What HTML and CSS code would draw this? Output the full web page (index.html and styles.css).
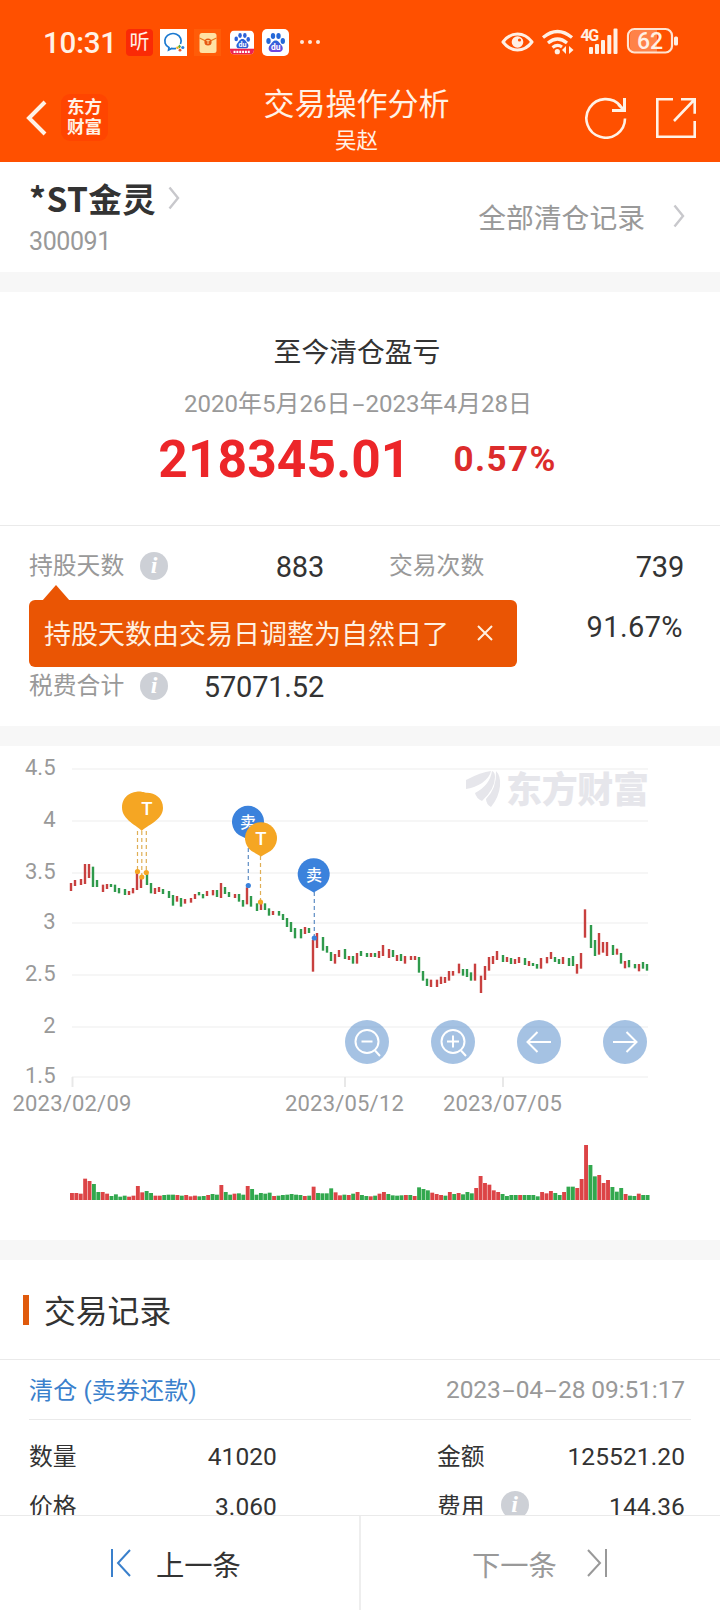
FILE: index.html
```
<!DOCTYPE html>
<html lang="zh-CN">
<head>
    <meta charset="UTF-8">
    <meta name="viewport" content="width=device-width, initial-scale=1.0">
    <title>交易操作分析</title>
    <link rel="stylesheet" href="styles.css">
</head>
<body>
    <header class="header">
        <div class="status-bar">
            <span class="clock">10:31</span>
            <span class="app-icon app-ting">听</span>
            <svg class="app-icon app-chat" viewBox="0 0 27 27">
                <rect width="27" height="27" fill="#fff"/>
                <path d="M20.500 15A8.200 7.500 0 1 0 9 18.600l-.4 2.400 3-1.600q2.300.5 4.400 0" fill="none" stroke="#1b79d0" stroke-width="1.700"/>
                <path d="M19.500 15.500l1.500 2-1.500 2-1.500-2z" fill="#4fae3c"/>
                <circle cx="22.800" cy="18.500" r="1.600" fill="#2f7fd8"/>
                <circle cx="20" cy="21.200" r="1.400" fill="#e8552a"/>
                <circle cx="17.500" cy="18.800" r="1.300" fill="#f2b21b"/>
            </svg>
            <svg class="app-icon app-envelope" viewBox="0 0 27 27">
                <rect width="27" height="27" fill="#ff5c08"/>
                <rect x="5.500" y="4" width="17" height="20" rx="2.500" fill="#ffe2a4"/>
                <path d="M5.500 9l8.500 4 8.500-4" fill="none" stroke="#ea7a1c" stroke-width="1.200"/>
                <circle cx="14" cy="13" r="3.600" fill="#e65a14"/>
                <path d="M12.300 11.600h3.400M14 11.600v3.400" stroke="#ffd995" stroke-width="1"/>
            </svg>
            <svg class="app-icon app-baidu-lite" viewBox="0 0 27 27">
                <clipPath id="liteClip"><rect width="27" height="27" rx="5"/></clipPath>
                <g clip-path="url(#liteClip)">
                    <rect width="27" height="27" fill="#fff"/>
                    <g fill="#2b62d9">
                        <ellipse cx="7" cy="9.500" rx="2" ry="2.700"/>
                        <ellipse cx="11.300" cy="5.500" rx="2" ry="2.800"/>
                        <ellipse cx="16.700" cy="5.500" rx="2" ry="2.800"/>
                        <ellipse cx="20.500" cy="10" rx="2" ry="2.700"/>
                        <path d="M14 9.500c3 0 4 3 5.800 5 2 2.500.7 5.500-2 5.500h-7.600c-2.700 0-4-3-2-5.500 1.800-2 2.800-5 5.800-5z"/>
                    </g>
                    <text x="14" y="18" class="paw-text" font-size="8">du</text>
                    <rect y="20.500" width="27" height="6.500" fill="#ec2350"/>
                    <path d="M4 24h19" stroke="#fff" stroke-width="2.500" stroke-dasharray="2.200 1"/>
                </g>
            </svg>
            <svg class="app-icon app-baidu" viewBox="0 0 27 27">
                <defs>
                    <linearGradient id="paw" x1="0" y1="0" x2="0" y2="1">
                        <stop offset="0" stop-color="#2468d8"/>
                        <stop offset="1" stop-color="#7444e0"/>
                    </linearGradient>
                </defs>
                <rect width="27" height="27" rx="5" fill="#fff"/>
                <ellipse cx="6.500" cy="12" rx="2.200" ry="3" fill="#2468d8"/>
                <ellipse cx="11" cy="7" rx="2.200" ry="3" fill="#2468d8"/>
                <ellipse cx="16.500" cy="7" rx="2.200" ry="3" fill="#2468d8"/>
                <ellipse cx="20.800" cy="12" rx="2.200" ry="3" fill="#2468d8"/>
                <path d="M13.700 11.500c3 0 4 2.800 5.800 4.800 2.500 2.800 1 6.700-2 6.700h-7.600c-3 0-4.500-3.900-2-6.700 1.800-2 2.800-4.800 5.800-4.800z" fill="url(#paw)"/>
                <text x="13.700" y="21" class="paw-text" font-size="8.500">du</text>
            </svg>
            <span class="more"><i></i><i></i><i></i></span>

            <svg class="sys-icons" width="178" height="30" viewBox="0 0 178 30">
                <!-- eye -->
                <path d="M2 16Q8 8 16.500 8T31 16q-6 8-14.500 8T2 16z" fill="none" stroke="#fff0e4" stroke-width="3" stroke-linejoin="round"/>
                <circle cx="16.500" cy="16" r="5.800" fill="#fff0e4"/>
                <circle cx="18.500" cy="14" r="1.600" fill="#ff5000"/>
                <!-- wifi -->
                <g fill="none" stroke="#fff0e4" stroke-width="3.200">
                    <path d="M42 11.500q14.500-12 29 0"/>
                    <path d="M47 17q9.500-8 19 0"/>
                    <path d="M51.500 21.500q5-3.800 9.500-.5"/>
                </g>
                <circle cx="56.300" cy="25.700" r="2.600" fill="#fff0e4"/>
                <path d="M65 20v8l-4-4zM68 20v8l4.500-4z" fill="#fff0e4"/>
                <!-- signal -->
                <text x="79.500" y="15" class="net-text">4G</text>
                <g fill="#fff0e4">
                    <rect x="88" y="21" width="4" height="7" rx="1"/>
                    <rect x="94" y="18" width="4" height="10" rx="1"/>
                    <rect x="100" y="14" width="4" height="14" rx="1"/>
                    <rect x="106.300" y="9" width="4" height="19" rx="1"/>
                    <rect x="112.500" y="2.500" width="4" height="25.500" rx="1"/>
                </g>
                <!-- battery -->
                <path d="M134 4h22v22h-22a5 5 0 0 1-5-5V9a5 5 0 0 1 5-5z" fill="#ff8248"/>
                <rect x="127" y="3" width="44" height="23.500" rx="6.500" fill="none" stroke="#ffe4d2" stroke-width="2.200"/>
                <rect x="173" y="10.500" width="4" height="9" rx="1.500" fill="#fff0e4"/>
                <text x="149" y="23" class="bat-text">62</text>
            </svg>
        </div>

        <div class="nav-bar">
            <div class="nav-left">
                <svg width="22" height="36" viewBox="0 0 22 36"><path d="M20 2L4 18l16 16" fill="none" stroke="#fff2e6" stroke-width="4"/></svg>
                <span class="brand">东方<br>财富</span>
            </div>
            <div class="nav-title">
                <h1>交易操作分析</h1>
                <p>吴赵</p>
            </div>
            <div class="nav-right">
                <svg width="42" height="42" viewBox="0 0 42 42" fill="none" stroke="#fff2e6">
                    <path d="M40 21.500A19.300 19.300 0 1 1 35.500 9" stroke-width="2.600"/>
                    <path d="M39.500 1v12.500H27" stroke-width="3"/>
                    <path d="M38.500 12.500l-5-5" stroke-width="3"/>
                </svg>
                <svg width="42" height="42" viewBox="0 0 42 42" fill="none" stroke="#fff2e6" stroke-width="2.600">
                    <path d="M18 2.200H2.300v37.500h37.400V24"/>
                    <path d="M26 2.200h13.700v14.500M39 3L19 24"/>
                </svg>
            </div>
        </div>
    </header>

    <main class="content">
        <section class="stock">
            <div class="stock-main">
                <h2>*ST金灵 <svg width="12" height="24" viewBox="0 0 12 24"><path d="M1.500 1.500L10 12 1.500 22.500" fill="none" stroke="#c8c8cc" stroke-width="2.400"/></svg></h2>
                <p class="code">300091</p>
            </div>
            <a class="all-records">全部清仓记录 <svg width="12" height="24" viewBox="0 0 12 24"><path d="M1.500 1.500L10 12 1.500 22.500" fill="none" stroke="#c8c8cc" stroke-width="2.400"/></svg></a>
        </section>

        <section class="summary">
            <h3>至今清仓盈亏</h3>
            <p class="period">2020年5月26日<i class="dash">-</i>2023年4月28日</p>
            <p class="profit"><strong>218345.01</strong><b>0.57%</b></p>
        </section>

        <section class="stats">
            <div class="stat"><span>持股天数</span><i class="info">i</i><em>883</em></div>
            <div class="stat"><span>交易次数</span><em>739</em></div>
            <div class="stat"></div>
            <div class="stat"><em class="rate">91.67%</em></div>
            <div class="stat"><span>税费合计</span><i class="info">i</i><em>57071.52</em></div>
            <div class="tip">
                <span>持股天数由交易日调整为自然日了</span>
                <svg width="16" height="16" viewBox="0 0 16 16"><path d="M1 1l14 14M15 1L1 15" stroke="#fff0e0" stroke-width="2"/></svg>
            </div>
        </section>

        <section class="chart">
            <svg class="chart-svg" width="720" height="494" viewBox="0 0 720 494">
                <g class="watermark">
                    <path d="M466 34q15-8 25-9-1 6-9 12-8 5-16 6z"/>
                    <path d="M475 47q15-8 17-22 3 1 3 6 0 12-13 24-6-3-7-8z"/>
                    <path d="M486 53q11-11 10-28 5 5 4 15-1 11-9 21-5-3-5-8z"/>
                    <text x="506" y="57" textLength="143">东方财富</text>
                </g>
                <g id="grid"></g>
                <g id="candles"></g>
                <g id="volume"></g>

                <g class="pin-t">
                    <path class="stem" d="M137.500 85v39M141.800 85v44M146.300 85v39"/>
                    <circle cx="137.500" cy="125.500" r="2.600"/>
                    <circle cx="141.800" cy="131" r="2.600"/>
                    <circle cx="146.300" cy="126.500" r="2.600"/>
                    <path d="M141.800 85C138 80 122 74 122 61.500 122 49 133 45.500 139 45.500 143 45.500 144 46.700 147 46.700 155 46.700 163 52 163 62 163 74 146 80 141.800 85z"/>
                    <text x="147" y="69">T</text>
                </g>
                <g class="pin-s">
                    <path class="stem" d="M248.300 95v42"/>
                    <circle cx="248.300" cy="139.500" r="2.600"/>
                    <path d="M248 93.500l-9-4.500a16 16 0 1 1 18 0z"/>
                    <text x="248" y="82">卖</text>
                </g>
                <g class="pin-t">
                    <path class="stem" d="M260.500 110v44"/>
                    <circle cx="260.500" cy="156" r="2.600"/>
                    <path d="M261 110.500l-9.500-5.500a16 16 0 1 1 19 0z"/>
                    <text x="261" y="98.500">T</text>
                </g>
                <g class="pin-s">
                    <path class="stem" d="M314.300 146v44"/>
                    <circle cx="314.300" cy="192" r="2.600"/>
                    <path d="M313.700 146.500l-9.500-5.500a16 16 0 1 1 19 0z"/>
                    <text x="314" y="134.500">卖</text>
                </g>
            </svg>

            <div class="chart-tools">
                <button><svg viewBox="0 0 44 44"><circle cx="22" cy="21.500" r="11.500"/><path d="M16.500 21.500h11M30 30.500l5 5.500"/></svg></button>
                <button><svg viewBox="0 0 44 44"><circle cx="22" cy="21.500" r="11.500"/><path d="M16 21.500h12M22 15.500v12M30 30.500l5 5.500"/></svg></button>
                <button><svg viewBox="0 0 44 44"><path d="M34 22H11M20.500 12L10.500 22l10 10"/></svg></button>
                <button><svg viewBox="0 0 44 44"><path d="M10 22h23M23.500 12l10 10-10 10"/></svg></button>
            </div>
        </section>

        <section class="records">
            <h3 class="records-title"><span>交易记录</span></h3>
            <div class="record">
                <div class="record-head">
                    <span class="kind">清仓 (卖券还款)</span>
                    <span class="when">2023<i class="dash">-</i>04<i class="dash">-</i>28 09:51:17</span>
                </div>
                <div class="record-grid">
                    <div class="cell"><span>数量</span><em>41020</em></div>
                    <div class="cell"><span>金额</span><em>125521.20</em></div>
                    <div class="cell"><span>价格</span><em>3.060</em></div>
                    <div class="cell"><span>费用</span><i class="info">i</i><em>144.36</em></div>
                </div>
            </div>
        </section>
    </main>

    <footer class="pager">
        <a class="prev"><svg width="22" height="30" viewBox="0 0 22 30"><path d="M2 1v28M20 2L8 15l12 13" fill="none" stroke="#3a80cc" stroke-width="2"/></svg>上一条</a>
        <a class="next">下一条<svg width="22" height="30" viewBox="0 0 22 30"><path d="M20 1v28M2 2l12 13L2 28" fill="none" stroke="#999" stroke-width="2"/></svg></a>
    </footer>

    <script src="chart.js"></script>
</body>
</html>
```

FILE: styles.css
```
* {
    box-sizing: border-box;
    margin: 0;
    padding: 0;
}
body {
    width: 720px;
    height: 1610px;
    display: flex;
    flex-direction: column;
    overflow: hidden;
    background: #fff;
    color: #333;
    font-family: Roboto, "Noto Sans CJK SC", sans-serif;
}
em, i {
    font-style: normal;
}
svg {
    display: block;
    flex: none;
}

/* header */
.header {
    height: 162px;
    flex: none;
    background: #ff5000;
    color: #fff2e6;
}
.status-bar {
    height: 74px;
    padding: 10px 41px 0 43px;
    display: flex;
    align-items: center;
}
.clock {
    width: 83px;
    padding-top: 2px;
    font-size: 29.5px;
    font-weight: 500;
    letter-spacing: -0.2px;
}
.app-icon {
    width: 27px;
    height: 27px;
    flex: none;
    margin-right: 7px;
}
.app-ting {
    border-radius: 4px;
    background: #fa2a06;
    font-size: 20px;
    line-height: 26px;
    text-align: center;
}
.app-baidu-lite {
    width: 24px;
    height: 25px;
    margin-left: 2px;
    margin-right: 8px;
}
.app-baidu {
    margin-right: 11px;
}
.paw-text {
    fill: #fff;
    font-weight: 700;
    text-anchor: middle;
}
.more {
    display: flex;
    gap: 4px;
}
.more i {
    width: 4px;
    height: 4px;
    border-radius: 50%;
    background: #ffe8d8;
}
.sys-icons {
    margin-left: auto;
    margin-top: -2px;
}
.net-text {
    font-size: 16px;
    font-weight: 700;
    fill: #fff0e4;
    letter-spacing: -1.5px;
}
.bat-text {
    font-size: 23px;
    font-weight: 500;
    fill: #fff0e4;
    text-anchor: middle;
}
.nav-bar {
    height: 88px;
    padding: 0 23px 0 25px;
    display: grid;
    grid-template-columns: 141px 1fr 150px;
}
.nav-left {
    display: flex;
    align-items: center;
    gap: 14px;
    height: 88px;
}
.brand {
    width: 47px;
    height: 47px;
    margin-top: -1px;
    padding-top: 4px;
    border-radius: 9px;
    background: #ff4500;
    font-size: 17.5px;
    font-weight: 700;
    line-height: 19.5px;
    text-align: center;
}
.nav-title {
    padding-top: 9px;
    text-align: center;
}
.nav-title h1 {
    font-size: 31px;
    font-weight: 400;
    line-height: 44px;
}
.nav-title p {
    font-size: 21.5px;
    line-height: 27px;
}
.nav-right {
    display: flex;
    justify-content: flex-end;
    align-items: center;
    gap: 28px;
    height: 88px;
}

.content {
    flex: 1;
    min-height: 0;
    overflow: hidden;
}

/* stock name */
.stock {
    height: 130px;
    padding: 14px 35px 0 29px;
    display: flex;
    justify-content: space-between;
    border-bottom: 20px solid #f7f7f7;
}
.stock h2 {
    display: flex;
    align-items: center;
    gap: 12px;
    font-family: "Noto Sans CJK SC", sans-serif;
    font-size: 33.5px;
    font-weight: 700;
    line-height: 44px;
    letter-spacing: 0.4px;
}
.code {
    margin-top: 4px;
    font-size: 25px;
    line-height: 36px;
    letter-spacing: -0.4px;
    color: #999;
}
.all-records {
    display: flex;
    align-items: center;
    gap: 28px;
    height: 80px;
    font-size: 27.8px;
    color: #999;
}

/* profit */
.summary {
    height: 234px;
    padding-top: 39px;
    border-bottom: 1px solid #eaeaea;
    text-align: center;
}
.summary h3 {
    margin-right: 6px;
    font-size: 27.8px;
    font-weight: 400;
    line-height: 44px;
}
.period {
    margin: 11px 4px 0 0;
    font-size: 24px;
    line-height: 36px;
    color: #999;
}
.dash {
    display: inline-block;
    width: 15px;
    text-align: center;
    transform: scaleX(1.8);
}
.profit {
    display: flex;
    justify-content: center;
    align-items: center;
    gap: 43px;
    height: 74px;
    margin-right: 5px;
}
.profit strong {
    font-size: 51.5px;
    letter-spacing: 0.1px;
    color: #ec2629;
}
.profit b {
    font-size: 35px;
    letter-spacing: 1.4px;
    color: #dc2c2c;
}

/* stats */
.stats {
    position: relative;
    height: 220px;
    padding: 10px 36px 0 29px;
    display: grid;
    grid-template-columns: 295px 295px;
    grid-auto-rows: 60px;
    column-gap: 65px;
    border-bottom: 20px solid #f7f7f7;
}
.stat {
    display: flex;
    align-items: center;
}
.stat span {
    margin-top: -6px;
    font-size: 23.8px;
    color: #999;
}
.stat em {
    margin-left: auto;
    padding-top: 1px;
    font-size: 29px;
    letter-spacing: -0.2px;
}
.stat .rate {
    padding-right: 1px;
    letter-spacing: 0.4px;
}
.info {
    width: 28px;
    height: 28px;
    margin-left: 16px;
    border-radius: 50%;
    background: #cdd0d6;
    color: #fff;
    font: italic bold 24px/27px "Liberation Serif", serif;
    text-align: center;
}
.tip {
    position: absolute;
    left: 29px;
    top: 74px;
    width: 488px;
    height: 67px;
    padding: 0 24px 2px 15px;
    display: flex;
    align-items: center;
    justify-content: space-between;
    border-radius: 6px;
    background: #ea5504;
    color: #fff0e0;
    font-size: 27px;
}
.tip::before {
    content: "";
    position: absolute;
    left: 13px;
    top: -15px;
    border: 14px solid transparent;
    border-top: 0;
    border-bottom: 16px solid #ea5504;
}

/* chart */
.chart {
    position: relative;
    height: 514px;
    border-bottom: 20px solid #f7f7f7;
}
.watermark {
    fill: #e6e6eb;
    font-size: 36px;
    font-weight: 900;
}
.grid-line {
    stroke: #f6f6f6;
    stroke-width: 2;
}
.axis-tick {
    stroke: #e8e8e8;
    stroke-width: 2;
}
.axis-text {
    font-size: 22px;
    fill: #999;
}
.y-text {
    text-anchor: end;
}
.x-text {
    text-anchor: middle;
    letter-spacing: 0.2px;
}
.candle-r { fill: #c8403f; }
.candle-g { fill: #2f9a4c; }
.vol-r { fill: #dc4446; }
.vol-g { fill: #32a84e; }
.pin-t { fill: #f5a623; }
.pin-s { fill: #3b82dc; }
.pin-t .stem { stroke: #dfae55; }
.pin-s .stem { stroke: #5c8cc4; }
.stem {
    stroke-width: 1.2;
    stroke-dasharray: 4 3;
}
.pin-t text, .pin-s text {
    fill: #fff;
    text-anchor: middle;
}
.pin-t text {
    font-size: 18.5px;
    font-weight: 500;
}
.pin-s text {
    font-size: 16px;
    font-weight: 500;
}
.chart-tools {
    position: absolute;
    left: 345px;
    top: 274px;
    display: flex;
    gap: 42px;
}
.chart-tools button {
    width: 44px;
    height: 44px;
    border: 0;
    border-radius: 50%;
    background: rgba(75, 133, 200, 0.5);
}
.chart-tools svg {
    fill: none;
    stroke: #fff;
    stroke-width: 2;
}

/* records */
.records-title {
    height: 100px;
    padding-left: 23px;
    display: flex;
    align-items: center;
    gap: 15px;
    border-bottom: 1px solid #eaeaea;
    font-size: 31.8px;
    font-weight: 400;
}
.records-title::before {
    content: "";
    width: 6px;
    height: 30px;
    background: #e05a0c;
}
.records-title span {
    margin-top: -2px;
}
.record {
    padding: 0 29px;
}
.record-head {
    height: 60px;
    padding-right: 6px;
    display: flex;
    align-items: center;
    justify-content: space-between;
    border-bottom: 1px solid #eaeaea;
    font-size: 24px;
}
.kind {
    margin-top: -2px;
    letter-spacing: 0.15px;
    color: #3a80cc;
}
.when {
    font-size: 24.5px;
    letter-spacing: -0.1px;
    color: #999;
}
.record-grid {
    padding-top: 11px;
    display: grid;
    grid-template-columns: 248px 248px;
    grid-auto-rows: 50px;
    column-gap: 160px;
}
.cell {
    display: flex;
    align-items: center;
    font-size: 23.8px;
}
.cell span {
    margin-top: -4px;
}
.cell .info {
    margin-top: -2px;
}
.cell em {
    margin-left: auto;
    font-size: 24.5px;
    letter-spacing: 0.1px;
}

/* bottom pager */
.pager {
    height: 95px;
    flex: none;
    display: grid;
    grid-template-columns: 361px 359px;
    border-top: 1px solid #eaeaea;
    font-size: 28.3px;
}
.pager a {
    display: flex;
    align-items: center;
}
.prev {
    padding-left: 110px;
    gap: 24px;
    border-right: 2px solid #eee;
}
.next {
    padding-left: 111px;
    gap: 29px;
    color: #999;
}
```

FILE: chart.js
```
// each candle: colour + top-bottom, in thirds of a pixel below the chart top
const candles = `
r399-423 r390-408 r387-405 r342-402 r342-384 g350-411 g390-411 r404-426 r402-417 g402-411 g404-426 g414-430
g417-435 r423-435 r414-430 r366-420 r384-414 g372-405 g399-430 r414-432 r411-426 g417-432 g423-444 g435-467
r438-455 g444-470 r447-461 r444-458 r432-447 g426-436 g432-445 r423-438 r420-436 g420-441 r399-444 g411-432
g426-441 r432-444 g432-455 g450-470 r412-463 g438-470 g460-483 r460-480 g460-480 g475-497 r483-495 g483-497
g492-510 g504-531 g516-546 g534-565 g537-565 r531-552 g534-549 r570-665 r549-594 g561-602 g588-608 g606-633
r612-641 r600-621 g597-627 r618-630 g618-641 r609-641 g603-618 g609-621 r609-621 g609-621 r603-624 r585-618
r597-624 g600-621 r615-633 g612-633 r618-641 r618-630 r618-630 g621-668 g663-692 g686-708 r689-711 r689-711
r680-702 r681-699 r663-692 r663-677 r641-670 g657-677 g657-681 g667-692 r641-692 r677-729 r648-690 r621-662
r618-642 r603-630 g615-636 r621-636 g624-642 r627-642 r621-639 g624-645 r633-648 g639-648 g642-656 r624-656
r621-640 r606-627 g621-636 g627-642 r621-642 g624-648 g618-648 r642-671 r609-656 r478-563 g525-594 g570-618
r549-614 r576-608 r576-618 g585-615 r596-614 g609-641 r633-655 g630-652 g642-655 r642-664 g636-656 g642-662
`.trim().split(/\s+/);

// each volume bar: colour + height, in thirds of a pixel
const volumes = `
r21 r21 r19 r64 r57 g48 g24 r24 r19 g12 g17 g10 g13 r10 r13 r42 r23 g27 g21 r13 r13 g15 g16 g16 r15 g13 r15
r11 r13 g11 g12 r15 g18 g16 r45 g24 g16 r19 g20 g16 r42 g33 g16 g21 g19 g22 r12 g13 g15 g16 g18 g16 g15 r12
g13 r40 g21 g20 g20 g35 r23 r14 g16 r15 g19 r24 g15 g12 r11 g13 r19 r24 g18 g14 g13 g14 r15 g15 r12 g38 g33
g29 r22 r18 r15 g13 r24 g18 r21 g17 g24 g20 r36 r72 r51 r46 r29 r24 g18 g12 g15 g15 r15 g15 g15 g15 g11 r24
r20 r27 g21 g15 r24 g40 g40 r36 r63 r165 g105 g71 r75 r51 r60 g39 g25 g36 r18 g13 g12 r19 g15 g15
`.trim().split(/\s+/);

function add(parent, tag, attrs, text) {
    const el = document.createElementNS('http://www.w3.org/2000/svg', tag);
    for (const key in attrs) el.setAttribute(key, attrs[key]);
    if (text) el.textContent = text;
    document.getElementById(parent).appendChild(el);
}

const rows = [['4.5', 23], ['4', 75], ['3.5', 127], ['3', 177], ['2.5', 229], ['2', 281], ['1.5', 331]];
rows.forEach(([label, y]) => {
    add('grid', 'line', { x1: 72, x2: 648, y1: y, y2: y, class: 'grid-line' });
    add('grid', 'text', { x: 55.5, y: y + 6, class: 'axis-text y-text' }, label);
});

const dates = [['2023/02/09', 72], ['2023/05/12', 344.5], ['2023/07/05', 502.5]];
dates.forEach(([label, x]) => {
    add('grid', 'line', { x1: x + 0.5, x2: x + 0.5, y1: 331, y2: 341, class: 'axis-tick' });
    add('grid', 'text', { x: x, y: 365, class: 'axis-text x-text' }, label);
});

candles.forEach((c, i) => {
    const [top, bottom] = c.slice(1).split('-').map(Number);
    const x = 69.8 + 2 * Math.round(i * 2.1985 + 0.22);
    add('candles', 'rect', { x: x, y: top / 3 + 4, width: 2.4, height: (bottom - top) / 3, class: 'candle-' + c[0] });
});

volumes.forEach((v, i) => {
    const h = v.slice(1) / 3;
    add('volume', 'rect', { x: 70 + i * 4.394, y: 454 - h, width: 3.9, height: h, class: 'vol-' + v[0] });
});
```
